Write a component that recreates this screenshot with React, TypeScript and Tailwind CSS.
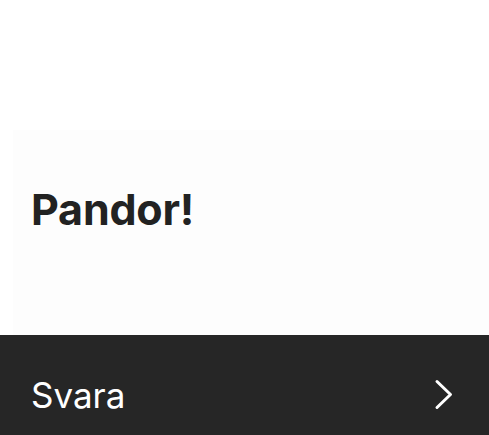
export default function App() {
  return (
    <div
      className="w-full h-[435px] bg-white flex flex-col overflow-hidden"
      style={{ fontFamily: 'Inter, "Noto Sans", sans-serif' }}
    >
      <div className="h-[130px] shrink-0" />
      <div className="ml-[13px] h-[205px] shrink-0 bg-[#fdfdfd] pl-[18px] pt-[58px]">
        <h1 className="text-[43px] leading-[43px] font-bold tracking-[-0.2px] text-[#222222]">Pandor!</h1>
      </div>
      <div className="flex-1 bg-[#262626] flex items-start justify-between pl-[31px] pr-[35px] pt-[43px]">
        <span className="text-[35px] leading-[35px] text-white">Svara</span>
        <svg width="20" height="32" viewBox="0 0 20 32" className="mt-[1px]" fill="none">
          <path d="M3 2.5 L16.5 15.5 L3 28.5" stroke="white" strokeWidth="3" strokeLinecap="round" strokeLinejoin="round" />
        </svg>
      </div>
    </div>
  );
}
